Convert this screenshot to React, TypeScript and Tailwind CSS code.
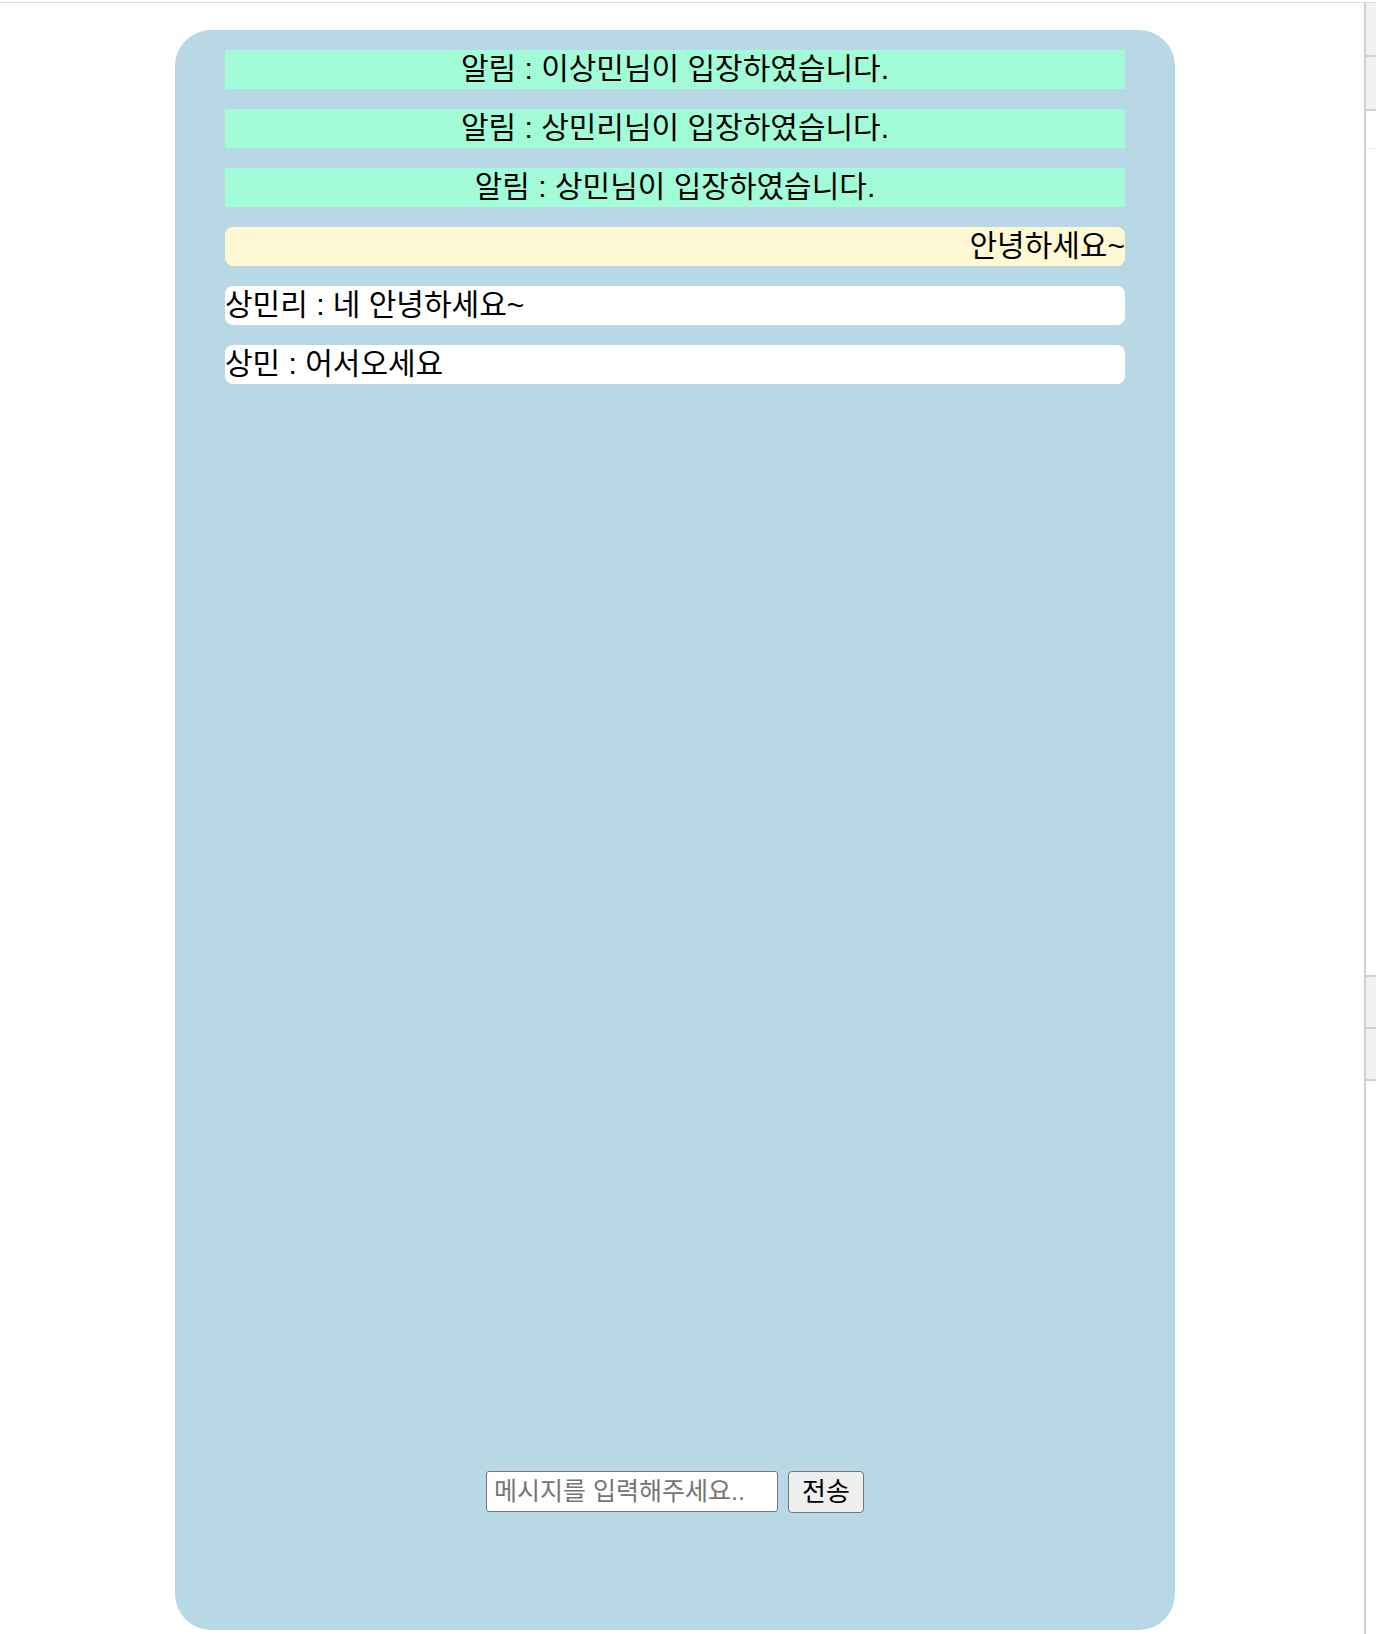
import { useState } from 'react'

type Message = {
  kind: 'notice' | 'mine' | 'other'
  text: string
}

const messages: Message[] = [
  { kind: 'notice', text: '알림 : 이상민님이 입장하였습니다.' },
  { kind: 'notice', text: '알림 : 상민리님이 입장하였습니다.' },
  { kind: 'notice', text: '알림 : 상민님이 입장하였습니다.' },
  { kind: 'mine', text: '안녕하세요~' },
  { kind: 'other', text: '상민리 : 네 안녕하세요~' },
  { kind: 'other', text: '상민 : 어서오세요' },
]

function Bubble({ msg }: { msg: Message }) {
  if (msg.kind === 'notice') {
    return (
      <div className="h-[39px] leading-[37px] bg-[#a2fcd8] text-center">
        {msg.text}
      </div>
    )
  }
  if (msg.kind === 'mine') {
    return (
      <div className="h-[39px] leading-[37px] bg-[#fef9d4] rounded-[8px] text-right">
        {msg.text}
      </div>
    )
  }
  return (
    <div className="h-[39px] leading-[37px] bg-white rounded-[8px] text-left">
      {msg.text}
    </div>
  )
}

export default function App() {
  const [value, setValue] = useState('')

  return (
    <div
      className="w-[1376px] h-[1634px] bg-white overflow-hidden flex flex-col"
      style={{ fontFamily: '"Liberation Sans", "Noto Sans CJK KR", sans-serif' }}
    >
      {/* browser chrome line */}
      <div className="h-[2px] shrink-0 bg-white" />
      <div className="h-[1px] shrink-0 bg-[#dcdcdc]" />

      <div className="flex flex-1 min-h-0">
        <main className="flex-1 pt-[27px] pl-[175px]">
          <div className="w-[1000px] h-[1600px] bg-[#b7d8e4] rounded-[36px] flex flex-col px-[50px] pt-[20px] text-[30px] text-black">
            <div className="flex-1 flex flex-col gap-[20px]">
              {messages.map((m, i) => (
                <Bubble key={i} msg={m} />
              ))}
            </div>

            {/* input row */}
            <div className="flex justify-center items-start gap-[10px] pb-[117px]">
              <input
                value={value}
                onChange={e => setValue(e.target.value)}
                placeholder="메시지를 입력해주세요.."
                className="w-[292px] h-[41px] bg-white border border-[#767676] rounded-[3px] px-[7px] text-[25px] text-black placeholder:text-[#757575] outline-none"
              />
              <button className="w-[76px] h-[42px] bg-[#efefef] border border-[#767676] rounded-[4px] text-[26px] text-black leading-none">
                전송
              </button>
            </div>
          </div>
        </main>

        {/* side strip */}
        <aside className="w-[12px] shrink-0 border-l-2 border-[#cfcfd4] flex flex-col">
          <div className="h-[54px] bg-[#f1f1f3] border-b-2 border-[#cfcfd4]" />
          <div className="h-[54px] bg-[#f1f1f3] border-b-2 border-[#cfcfd4]" />
          <div className="h-[38px] border-b border-[#ececec]" />
          <div className="h-[826px]" />
          <div className="h-[54px] bg-[#f1f1f3] border-y-2 border-[#cfcfd4]" />
          <div className="h-[52px] bg-[#f1f1f3] border-b-2 border-[#cfcfd4]" />
        </aside>
      </div>
    </div>
  )
}
